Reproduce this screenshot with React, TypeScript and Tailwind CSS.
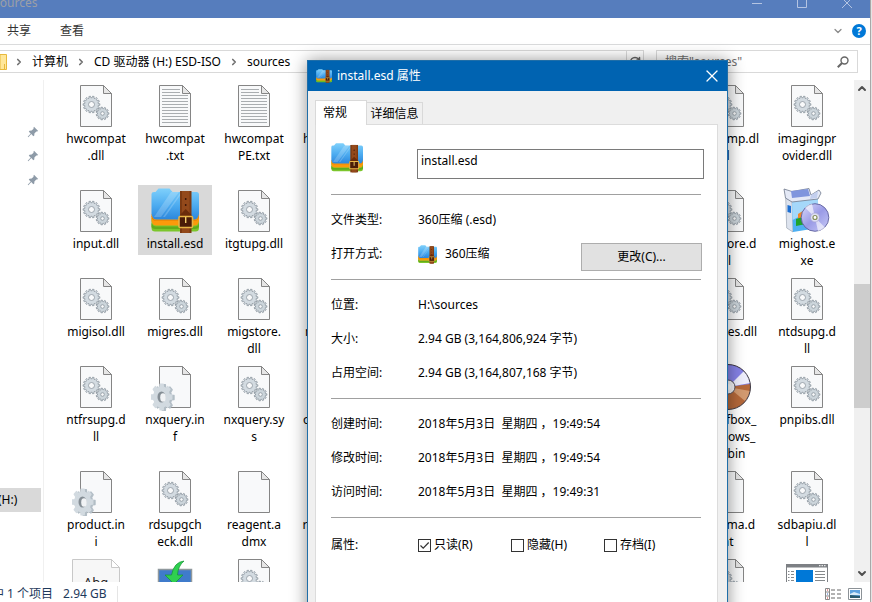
import React, { useState } from 'react';
import { ChevronDown, ChevronRight, ChevronUp, RefreshCw, X } from 'lucide-react';

type IconKind =
  | 'dll'
  | 'text'
  | 'blank'
  | 'config'
  | 'archive'
  | 'setup'
  | 'disc'
  | 'font'
  | 'monitor'
  | 'app';

interface FileEntry {
  icon: IconKind;
  // label, already broken into lines
  lines: string[];
  place?: string;
  selected?: boolean;
}

const files: FileEntry[] = [
  { icon: 'dll', lines: ['hwcompat', '.dll'], place: 'col-start-1' },
  { icon: 'text', lines: ['hwcompat', '.txt'] },
  { icon: 'text', lines: ['hwcompat', 'PE.txt'] },
  { icon: 'text', lines: ['hwexclude', 'PE_x64', '.txt'] },
  { icon: 'dll', lines: ['hwcomp.dl', 'l'], place: 'col-start-9' },
  { icon: 'dll', lines: ['imagingpr', 'ovider.dll'] },

  { icon: 'dll', lines: ['input.dll'], place: 'col-start-1' },
  { icon: 'archive', lines: ['install.esd'], selected: true },
  { icon: 'dll', lines: ['itgtupg.dll'] },
  { icon: 'dll', lines: ['migcore.d', 'll'], place: 'col-start-9' },
  { icon: 'setup', lines: ['mighost.e', 'xe'] },

  { icon: 'dll', lines: ['migisol.dll'], place: 'col-start-1' },
  { icon: 'dll', lines: ['migres.dll'] },
  { icon: 'dll', lines: ['migstore.', 'dll'] },
  { icon: 'dll', lines: ['migsys.dll'] },
  { icon: 'dll', lines: ['mxeres.dll'], place: 'col-start-9' },
  { icon: 'dll', lines: ['ntdsupg.d', 'll'] },

  { icon: 'dll', lines: ['ntfrsupg.d', 'll'], place: 'col-start-1' },
  { icon: 'config', lines: ['nxquery.in', 'f'] },
  { icon: 'dll', lines: ['nxquery.sy', 's'] },
  { icon: 'dll', lines: ['offline.xml'] },
  { icon: 'disc', lines: ['bootfbox_', 'windows_', '10.bin'], place: 'col-start-9' },
  { icon: 'dll', lines: ['pnpibs.dll'] },

  { icon: 'config', lines: ['product.in', 'i'], place: 'col-start-1' },
  { icon: 'dll', lines: ['rdsupgch', 'eck.dll'] },
  { icon: 'blank', lines: ['reagent.a', 'dmx'] },
  { icon: 'dll', lines: ['reagent.dll'] },
  { icon: 'blank', lines: ['schema.d', 'at'], place: 'col-start-9' },
  { icon: 'dll', lines: ['sdbapiu.dl', 'l'] },

  { icon: 'font', lines: [], place: 'col-start-1' },
  { icon: 'monitor', lines: [] },
  { icon: 'dll', lines: [] },
  { icon: 'dll', lines: [], place: 'col-start-9' },
  { icon: 'app', lines: [] },
];

const gearPath = (cx: number, cy: number, outer: number, inner: number, teeth: number) => {
  const points: string[] = [];
  const step = (Math.PI * 2) / teeth;
  for (let i = 0; i < teeth; i++) {
    const a = i * step;
    [
      [inner, -0.3],
      [outer, -0.2],
      [outer, 0.2],
      [inner, 0.3],
    ].forEach(([r, t]) => {
      points.push(`${(cx + r * Math.cos(a + t * step)).toFixed(2)} ${(cy + r * Math.sin(a + t * step)).toFixed(2)}`);
    });
  }
  return `M${points.join('L')}Z`;
};

const Page = () => (
  <>
    <path d="M8.5 3.5H31.5L39.5 11.5V44.5H8.5Z" fill="#f8f9fa" stroke="#858585" />
    <path d="M31.5 3.5V11.5H39.5Z" fill="#e6e6e6" stroke="#858585" />
  </>
);

const Gears = () => (
  <g stroke="#8b969e" strokeWidth="0.8">
    <path d={gearPath(19.5, 22.5, 8.4, 6.8, 14)} fill="#d3dbe1" />
    <circle cx="19.5" cy="22.5" r="3" fill="#f8f9fa" />
    <path d={gearPath(30.5, 31.5, 6.4, 5, 11)} fill="#ccd5db" />
    <circle cx="30.5" cy="31.5" r="1.8" fill="#f8f9fa" />
  </g>
);

const ArchiveArt = () => (
  <>
    <path d="M0.5 31H48V41Q48 44.5 44.5 44.5H4Q0.5 44.5 0.5 41Z" fill="#7cc62c" />
    <path d="M0.5 36Q2 39.5 5 39.5H44Q47 39.5 48 36V40Q47 42 44 42H4Q1 42 0.5 40Z" fill="#62ab1c" />
    <path d="M0.5 27H48V34Q47 38.5 44 38.5H5Q1.5 38.5 0.5 34Z" fill="#fb9a0b" />
    <path d="M0.5 28Q2 33.5 6 33.5H43Q47 33.5 48 28V29.5Q47 34 43 34H6Q1 34 0.5 29.5Z" fill="#e07c00" />
    <path d="M0.5 7Q0.5 5 3 5H4.5L7.5 1.5H18.5L21.5 5H45.5Q48 5 48 7.5V27Q47 32.5 43 32.5H5.5Q1.5 32.5 0.5 27Z" fill="url(#folder-blue)" />
    <path d="M20 5H28L10 30H3Z" fill="#fff" opacity="0.2" />
    <path d="M30 5H31.5L14 30H12Z" fill="#fff" opacity="0.2" />
    <path d="M29 4H40.5V46H29Z" fill="#7c3a12" />
    <path d="M31 4H38.5V46H31Z" fill="#93491b" />
    <path d="M29 28L34.7 22L40.5 28V31H29Z" fill="#6a2c0b" />
    <circle cx="34.7" cy="12" r="0.9" fill="#35130a" />
    <circle cx="34.7" cy="18" r="0.9" fill="#35130a" />
    <rect x="28" y="29.5" width="13.5" height="11" rx="1" fill="#4a1c08" stroke="#e8b545" strokeWidth="1.6" />
    <path d="M34.7 30V36" stroke="#f5d06b" strokeWidth="1.4" />
  </>
);

const ArchiveIcon = ({ className }: { className: string }) => (
  <svg viewBox="0 1 48 46" className={className} preserveAspectRatio="none" aria-hidden="true">
    <ArchiveArt />
  </svg>
);

const FileArt = ({ kind }: { kind: IconKind }) => {
  switch (kind) {
    case 'dll':
      return (
        <>
          <Page />
          <Gears />
        </>
      );
    case 'text':
      return (
        <>
          <Page />
          <path
            d="M11 7.5H29M11 10.5H29M11 13.5H37M11 16.5H37M11 19.5H37M11 22.5H37M11 25.5H37M11 28.5H37M11 31.5H37M11 34.5H37M11 37.5H37M11 40.5H37"
            stroke="#a9adb0"
          />
        </>
      );
    case 'blank':
      return <Page />;
    case 'config':
      return (
        <>
          <Page />
          <g strokeWidth="1.5" strokeLinejoin="round">
            <path d={gearPath(13.5, 34.5, 13, 10, 8)} transform="translate(2 0) scale(0.8 1)" fill="#b3bec6" stroke="#b3bec6" />
            <path d={gearPath(12, 34, 13, 10, 8)} transform="translate(1 0) scale(0.8 1)" fill="#d2dae0" stroke="#d2dae0" />
          </g>
          <ellipse cx="10.5" cy="34" rx="4" ry="5.5" fill="#858e95" />
          <ellipse cx="12" cy="34.5" rx="2.8" ry="4.2" fill="#f1f3f5" />
        </>
      );
    case 'archive':
      return <ArchiveArt />;
    case 'setup':
      return (
        <>
          <path d="M2.7 11L9 14.5L10 45L3.7 41Z" fill="#dde3ee" stroke="#8f98a8" strokeWidth="0.6" />
          <path d="M9 14.5L35 11V41L10 45Z" fill="#4fb0f2" />
          <path d="M9 14.5L35 11V20L9.5 33Z" fill="#a5d8fa" />
          <path d="M15 27L23 22V32L15 34Z" fill="#f08a2c" />
          <path d="M13 32L23 29V37L13 39Z" fill="#1fa32b" />
          <path d="M1 2L9 4.5L26 1.5L28 8L36 3L38 6L35 12L9 15L2.5 11Z" fill="#e4e9f6" stroke="#6f788c" strokeWidth="0.8" />
          <path d="M8 4L25 2L27 9L9 11Z" fill="#7f95dd" />
          <path d="M28 8L35 4L34 11L27 12Z" fill="#c3cfee" />
          <path d="M4.5 18L8 19V26L4.5 25Z" fill="#1a6ed2" />
          <circle cx="32" cy="30.5" r="13.8" fill="url(#disc-lilac)" stroke="#5c5f9c" strokeWidth="0.9" />
          <path d="M32 30.5L22 20.5A14 14 0 0 1 29 16.8Z" fill="#fff" opacity="0.6" />
          <path d="M32 30.5L42 40.5A14 14 0 0 1 35 44.2Z" fill="#fff" opacity="0.6" />
          <circle cx="32" cy="30.5" r="4.5" fill="#dedff4" stroke="#a5a4cf" strokeWidth="0.7" />
          <circle cx="32" cy="30.5" r="2" fill="#fff" stroke="#86905c" strokeWidth="1.2" />
        </>
      );
    case 'disc':
      return (
        <>
          <circle cx="24" cy="24" r="22.5" fill="#b5683a" />
          <path d="M1.5 24A22.5 22.5 0 0 1 46.3 21L24 24Z" fill="#8582e6" />
          <path d="M24 24L40 8A22.5 22.5 0 0 1 46.3 20Z" fill="#eeeefc" />
          <path d="M24 24L46 28A22.5 22.5 0 0 1 41 38Z" fill="#d39a70" />
          <circle cx="24" cy="24" r="22.5" fill="none" stroke="#3d3a46" />
          <circle cx="24" cy="24" r="7" fill="#f3f3f6" stroke="#55505a" />
          <circle cx="24" cy="24" r="3" fill="#fff" />
        </>
      );
    case 'font':
      return (
        <>
          <path d="M0.5 3.5H39.5L47.5 11.5V48H0.5Z" fill="#f7f7f7" stroke="#c8c8c8" />
          <path d="M39.5 3.5V11.5H47.5Z" fill="#fff" stroke="#c8c8c8" />
          <text x="24" y="31" textAnchor="middle" fontSize="13" fill="#222">
            Abg
          </text>
        </>
      );
    case 'monitor':
      return (
        <>
          <rect x="7.5" y="13.5" width="33" height="30" fill="#3f7bcb" stroke="#8f989d" strokeWidth="1.5" />
          <path d="M33 5Q23 6 20.5 19H14L23 28L32 19H26.5Q27 10 33 5Z" fill="#2fd050" stroke="#149432" strokeWidth="0.7" />
        </>
      );
    case 'app':
      return (
        <>
          <rect x="3.5" y="8.5" width="41" height="36" fill="#fff" stroke="#7d8084" />
          <path d="M3 8H45V11.5H3Z" fill="#7d8084" />
          <path d="M36 9.7H43" stroke="#fff" strokeDasharray="1.5 1" />
          <rect x="13" y="14" width="17" height="18" fill="#0078d7" />
          <path
            d="M5 15.5H6.5M8 15.5H11M5 18.5H6.5M8 18.5H11M5 21.5H6.5M8 21.5H11M5 24.5H6.5M8 24.5H11M32 15.5H42M32 18.5H42M32 21.5H42M32 24.5H42"
            stroke="#85898c"
          />
        </>
      );
  }
};

const FileTile = ({ file }: { file: FileEntry }) => (
  <li
    className={`flex flex-col items-center self-start pt-0.5 pb-[3px] ${file.place ?? ''} ${
      file.selected ? 'bg-[#d9d9d9]' : ''
    }`}
  >
    <svg viewBox="0 0 48 48" className="size-12 shrink-0" aria-hidden="true">
      <FileArt kind={file.icon} />
    </svg>
    {file.lines.map((line, i) => (
      <span key={i} className="block leading-[17px] whitespace-nowrap">
        {line}
      </span>
    ))}
  </li>
);

const Pin = () => (
  <svg viewBox="0 0 12 12" className="size-3" aria-hidden="true">
    <path
      d="M7 0.8L11.2 5L10 5.6L9.3 5.4L7.4 7.4L7.3 9.5L6.3 10.2L4.3 8.1L1.3 11.2L0.7 10.7L3.7 7.6L1.8 5.7L2.5 4.7L4.6 4.6L6.6 2.7L6.4 2Z"
      fill="#8e9ba8"
    />
  </svg>
);

const Crumb = ({ children }: { children: React.ReactNode }) => (
  <a href="#" className="flex items-center gap-2 whitespace-nowrap">
    <ChevronRight className="size-2.5 text-[#707070]" strokeWidth={4} />
    {children}
  </a>
);

const Row = ({ label, children }: { label: string; children: React.ReactNode }) => (
  <div className="flex h-[34px] items-center">
    <dt className="w-[87px] shrink-0">{label}</dt>
    <dd className="flex h-full flex-1 items-center">{children}</dd>
  </div>
);

const Attribute = ({ label, defaultChecked }: { label: string; defaultChecked?: boolean }) => (
  <label className="flex w-[93px] items-center gap-[3px]">
    <span className="relative flex size-[13px]">
      <input
        type="checkbox"
        defaultChecked={defaultChecked}
        className="peer size-[13px] appearance-none border border-[#333] bg-white"
      />
      <svg viewBox="0 0 13 13" className="pointer-events-none absolute inset-0 hidden peer-checked:block">
        <path d="M2.5 6.5L5.2 9.2L10.7 3.5" fill="none" stroke="#333" strokeWidth="1.2" />
      </svg>
    </span>
    {label}
  </label>
);

const PropertiesDialog = () => {
  const [name, setName] = useState('install.esd');

  return (
    <section
      role="dialog"
      aria-label="install.esd 属性"
      className="absolute top-[60px] -bottom-12 left-[307px] flex w-[421px] flex-col border border-[#1f6ea8] bg-[#f0f0f0] shadow-[0_1px_16px_rgba(0,0,0,0.45)]"
    >
      <header className="flex h-[30px] shrink-0 items-center bg-[#0063b1] pr-[5px] pl-2 text-white">
        <ArchiveIcon className="h-3.5 w-4" />
        <h1 className="ml-[5px] flex-1">install.esd 属性</h1>
        <button aria-label="关闭">
          <X className="size-5" strokeWidth={1.5} />
        </button>
      </header>

      <div className="flex flex-1 flex-col px-[7px] pt-[9px]">
        <div role="tablist" className="flex items-end">
          <button
            role="tab"
            aria-selected="true"
            className="relative z-10 -mb-px h-[25px] w-[52px] border border-b-0 border-[#d9d9d9] bg-white pr-3"
          >
            常规
          </button>
          <button role="tab" aria-selected="false" className="h-[22px] w-14 border border-b-0 border-l-0 border-[#d9d9d9]">
            详细信息
          </button>
        </div>

        <div className="mr-0.5 flex-1 border border-[#dcdcdc] bg-white pr-[13px] pl-[15px]">
          <div className="flex h-[69px] items-start pt-[18px]">
            <ArchiveIcon className="h-[30px] w-8" />
            <input
              aria-label="文件名"
              value={name}
              onChange={(e) => setName(e.target.value)}
              className="mt-1.5 ml-[54px] h-[30px] min-w-0 flex-1 border border-[#7a7a7a] px-[3px] pb-2 outline-none"
            />
          </div>

          <div className="mr-[3px]">
            <dl className="border-t border-[#a0a0a0] py-2">
              <Row label="文件类型:">360压缩 (.esd)</Row>
              <Row label="打开方式:">
                <ArchiveIcon className="mr-2 size-[19px]" />
                <span className="flex-1">360压缩</span>
                <button className="-mr-px h-7 w-[121px] self-end border border-[#adadad] bg-[#e1e1e1]">更改(C)...</button>
              </Row>
            </dl>
            <dl className="border-t border-[#a0a0a0] py-2">
              <Row label="位置:">H:\sources</Row>
              <Row label="大小:">2.94 GB (3,164,806,924 字节)</Row>
              <Row label="占用空间:">2.94 GB (3,164,807,168 字节)</Row>
            </dl>
            <dl className="border-t border-[#a0a0a0] py-2">
              <Row label="创建时间:">2018年5月3日&nbsp; 星期四 ，19:49:54</Row>
              <Row label="修改时间:">2018年5月3日&nbsp; 星期四 ，19:49:54</Row>
              <Row label="访问时间:">2018年5月3日&nbsp; 星期四 ，19:49:31</Row>
            </dl>
            <dl className="border-t border-[#a0a0a0] py-2.5">
              <Row label="属性:">
                <Attribute label="只读(R)" defaultChecked />
                <Attribute label="隐藏(H)" />
                <Attribute label="存档(I)" />
              </Row>
            </dl>
          </div>
        </div>
      </div>
    </section>
  );
};

const App: React.FC = () => {
  return (
    <div className="relative flex h-screen overflow-hidden bg-white font-['Noto_Sans','Noto_Sans_CJK_SC',sans-serif] text-[12px] leading-4 text-black">
      <svg className="absolute size-0" aria-hidden="true">
        <defs>
          <linearGradient id="folder-blue" x1="0" y1="0" x2="0" y2="1">
            <stop offset="0" stopColor="#7fd0fb" />
            <stop offset="0.55" stopColor="#4cabf0" />
            <stop offset="1" stopColor="#2b86dc" />
          </linearGradient>
          <linearGradient id="disc-lilac" x1="0" y1="0" x2="1" y2="1">
            <stop offset="0" stopColor="#dcdcfb" />
            <stop offset="0.5" stopColor="#9a9be6" />
            <stop offset="1" stopColor="#c9cbf7" />
          </linearGradient>
        </defs>
      </svg>

      <div className="flex min-w-0 flex-1 flex-col">
        <header className="flex h-[18px] shrink-0 items-center justify-between overflow-hidden bg-[#567dbd] pr-[18px] pb-3 text-[#9c9fa6]">
          <span className="-ml-1.5">sources</span>
          <div className="flex items-center gap-[35px] text-[#b4c4e2]">
            <svg viewBox="0 0 10 10" className="size-2.5">
              <path d="M0 5.5H10" stroke="currentColor" />
            </svg>
            <svg viewBox="0 0 10 10" className="size-2.5">
              <path d="M0.5 0.5H9.5V9.5H0.5Z" fill="none" stroke="currentColor" />
            </svg>
            <svg viewBox="0 0 10 10" className="size-2.5">
              <path d="M0 0L10 10M10 0L0 10" stroke="currentColor" />
            </svg>
          </div>
        </header>

        <nav className="flex h-[27px] shrink-0 items-center border-b border-[#dadbdc] pr-1 pl-[7px] text-[#333]">
          <button>共享</button>
          <button className="ml-[29px]">查看</button>
          <button aria-label="展开功能区" className="ml-auto">
            <ChevronDown className="size-3 text-[#8a8a8a]" strokeWidth={2.5} />
          </button>
          <button
            aria-label="帮助"
            className="ml-2 size-3.5 rounded-full bg-[#0078d7] text-center text-[11px] leading-3.5 font-bold text-white"
          >
            ?
          </button>
        </nav>

        <div className="flex h-[35px] shrink-0 items-start pt-[5px] pr-3">
          <div className="flex h-[23px] flex-1 items-center gap-2 border border-l-0 border-[#d9d9d9]">
            <svg viewBox="0 0 8 16" className="h-4 w-2">
              <path d="M0 0.5H6.5V15.5H0Z" fill="#ffe79a" stroke="#e8b93c" />
              <path d="M4.5 10V15.5" stroke="#e8b93c" />
            </svg>
            <nav className="-ml-0.5 flex gap-2">
              <Crumb>计算机</Crumb>
              <Crumb>CD 驱动器 (H:) ESD-ISO</Crumb>
              <Crumb>sources</Crumb>
            </nav>
            <ChevronDown className="ml-auto size-3 text-[#8a8a8a]" />
            <button
              aria-label="刷新"
              className="-ml-1 flex h-full w-[17px] items-center justify-center border-l border-[#d9d9d9]"
            >
              <RefreshCw className="size-3 text-[#666]" strokeWidth={3} />
            </button>
          </div>
          <label className="ml-3 flex h-[23px] w-[202px] items-center border border-[#d9d9d9] px-2">
            <input
              aria-label="搜索"
              placeholder={'搜索"sources"'}
              className="min-w-0 flex-1 outline-none placeholder:text-[#6d6d6d]"
            />
            <svg viewBox="0 0 12 12" className="size-3">
              <circle cx="7.5" cy="4.5" r="3.5" fill="none" stroke="#666" strokeWidth="1.4" />
              <path d="M5 7L0.8 11.2" stroke="#666" strokeWidth="2" />
            </svg>
          </label>
        </div>

        <main className="flex min-h-0 flex-1">
          <aside className="flex w-11 shrink-0 flex-col border-r border-[#f0f0f0] pt-10 pb-[70px]">
            {[1, 2, 3].map((i) => (
              <div key={i} className="flex h-6 items-center justify-end pr-1">
                <Pin />
              </div>
            ))}
            <a href="#" className="mt-auto mr-0.5 flex h-6 items-center bg-[#d9d9d9]">
              <span className="-ml-0.5">(H:)</span>
            </a>
          </aside>
          <ul className="grid min-w-0 flex-1 grid-cols-[repeat(10,74px)] content-start gap-x-[5px] gap-y-px overflow-hidden pl-[15px]">
            {files.map((file, i) => (
              <FileTile key={i} file={file} />
            ))}
          </ul>
          <div className="flex w-4 shrink-0 flex-col items-center bg-[#f0f0f0]">
            <ChevronUp className="h-[17px] w-3 text-[#505050]" strokeWidth={4} />
            <div className="w-full basis-[187px]" />
            <div className="w-full basis-[124px] bg-[#cdcdcd]" />
            <ChevronDown className="mt-auto h-[17px] w-3 text-[#505050]" strokeWidth={4} />
          </div>
        </main>

        <footer className="flex h-5 shrink-0 items-center pt-1 pr-2 text-[#1e395b]">
          <span className="-ml-2">中 1 个项目</span>
          <span className="ml-2.5 border-r border-[#e5e5e5] pr-2.5">2.94 GB</span>
          <svg viewBox="0 0 16 12" className="ml-auto h-3 w-4">
            <path d="M0.5 0.5H4.5V11.5H0.5ZM0.5 4H4.5M0.5 8H4.5" fill="none" stroke="#888" />
            <path d="M6 2H10M12 2H16M6 6H10M12 6H16M6 10H10M12 10H16" stroke="#666" />
            <path d="M2 2H3M2 10H3" stroke="#c33" />
            <path d="M2 6H3" stroke="#36c" />
          </svg>
          <svg viewBox="0 0 14 12" className="ml-[7px] h-3 w-3.5">
            <path d="M0.5 0.5H13.5V11.5H0.5Z" fill="#fff" stroke="#8c9297" />
            <path d="M2 2H12V10H2Z" fill="#5ea3df" />
            <path d="M2 6L6 4L12 6V7H2Z" fill="#d8ecf9" />
            <path d="M2 7L12 8V10H2Z" fill="#2b5b6e" />
          </svg>
        </footer>
      </div>

      <div className="w-0.5 shrink-0 border-l border-[#a8a8a8] bg-[#e4e4e4]" />
      <PropertiesDialog />
    </div>
  );
};

export default App;
